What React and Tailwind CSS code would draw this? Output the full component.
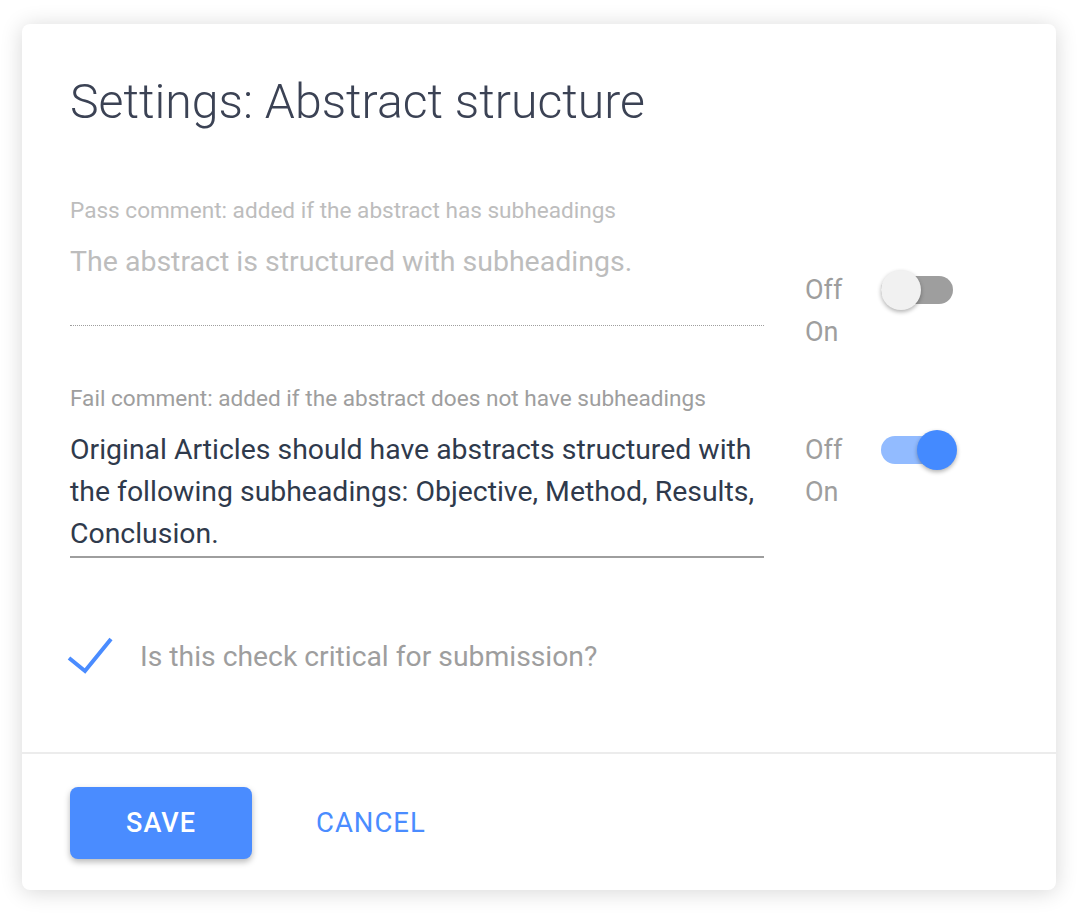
export default function App() {
  const font = { fontFamily: "Roboto, 'Noto Sans', sans-serif" };
  return (
    <div className="w-[1080px] h-[918px] bg-white overflow-hidden" style={font}>
      <div className="ml-[22px] mt-[24px] w-[1034px] h-[866px] bg-white rounded-[8px] shadow-[0_2px_22px_rgba(0,0,0,0.16)] flex flex-col">
        <div className="flex-1 px-[48px] pt-[52px]">
          <h1 className="text-[48.2px] leading-[52px] font-light text-[#3b4254]">Settings: Abstract structure</h1>

          {/* Row 1 */}
          <div className="mt-[71px] flex items-start">
            <div className="w-[694px]">
              <div className="text-[22.6px] leading-[24px] text-[#bdbdbd]">Pass comment: added if the abstract has subheadings</div>
              <div className="mt-[18px] h-[85px] border-b border-dotted border-[#9e9e9e] text-[28.5px] leading-[42px] text-[#bdbdbd]">
                The abstract is structured with subheadings.
              </div>
            </div>
            <div className="ml-[41px] mt-[70px] flex items-start">
              <div className="text-[27px] leading-[42px] text-[#9e9e9e]">
                <div>Off</div>
                <div>On</div>
              </div>
              <div className="ml-[39px] mt-[1px] relative w-[72px] h-[40px] flex items-center">
                <div className="w-[72px] h-[28px] rounded-full bg-[#9e9e9e]"></div>
                <div className="absolute left-0 top-0 w-[40px] h-[40px] rounded-full bg-[#f1f1f1] shadow-[0_2px_4px_rgba(0,0,0,0.3)]"></div>
              </div>
            </div>
          </div>

          {/* Row 2 */}
          <div className="mt-[34px] flex items-start">
            <div className="w-[694px]">
              <div className="text-[22.6px] leading-[24px] text-[#9e9e9e]">Fail comment: added if the abstract does not have subheadings</div>
              <div className="mt-[18px] pb-[1px] border-b-2 border-[#9e9e9e] text-[28.4px] leading-[42px] text-[#2f3a4c]">
                Original Articles should have abstracts structured with the following subheadings: Objective, Method, Results, Conclusion.
              </div>
            </div>
            <div className="ml-[41px] mt-[42px] flex items-start">
              <div className="text-[27px] leading-[42px] text-[#9e9e9e]">
                <div>Off</div>
                <div>On</div>
              </div>
              <div className="ml-[39px] mt-[1px] relative w-[76px] h-[40px] flex items-center">
                <div className="w-[72px] h-[28px] rounded-full bg-[#92bbff]"></div>
                <div className="absolute right-0 top-0 w-[40px] h-[40px] rounded-full bg-[#448aff] shadow-[0_2px_4px_rgba(0,0,0,0.3)]"></div>
              </div>
            </div>
          </div>

          {/* Checkbox row */}
          <div className="mt-[81px] flex items-center -ml-[4px]">
            <svg width="48" height="38" viewBox="0 0 48 38" fill="none" className="-mt-[4px]">
              <path d="M3 22 L19 35 L45 3" stroke="#4a8cff" strokeWidth="4" strokeLinejoin="miter" />
            </svg>
            <span className="ml-[26px] text-[28.3px] leading-[36px] text-[#9e9e9e]">Is this check critical for submission?</span>
          </div>
        </div>

        <div className="border-t-2 border-[#ececec] h-[138px] px-[48px] pt-[33px] flex items-start">
          <button className="w-[182px] h-[72px] rounded-[8px] bg-[#4a8cff] text-white text-[27px] font-medium tracking-[1px] shadow-[0_3px_6px_rgba(0,0,0,0.28)]">
            SAVE
          </button>
          <button className="ml-[64px] h-[72px] text-[#4a8cff] text-[27.5px] tracking-[1px]">
            CANCEL
          </button>
        </div>
      </div>
    </div>
  );
}
